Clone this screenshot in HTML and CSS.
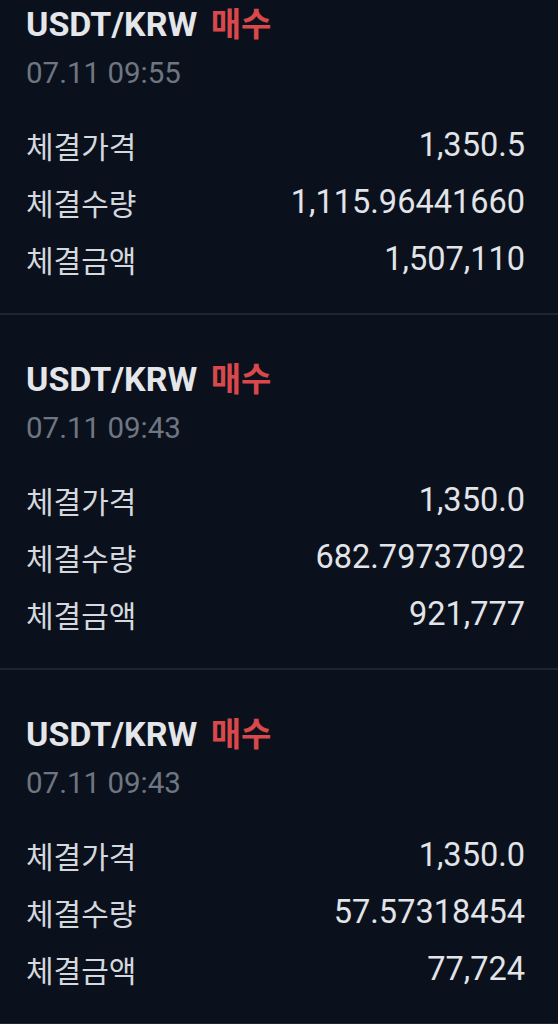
FILE: index.html
```html
<!DOCTYPE html>
<html lang="ko">
<head>
<meta charset="utf-8">
<title>체결내역</title>
<link rel="stylesheet" href="styles.css">
</head>
<body>
<main class="list">
  <section class="card">
    <h2 class="title">USDT/KRW <span class="side">매수</span></h2>
    <div class="date">07.11 09:55</div>
    <dl class="rows">
      <div class="row"><dt>체결가격</dt><dd>1,350.5</dd></div>
      <div class="row"><dt>체결수량</dt><dd>1,115.96441660</dd></div>
      <div class="row"><dt>체결금액</dt><dd>1,507,110</dd></div>
    </dl>
  </section>
  <section class="card">
    <h2 class="title">USDT/KRW <span class="side">매수</span></h2>
    <div class="date">07.11 09:43</div>
    <dl class="rows">
      <div class="row"><dt>체결가격</dt><dd>1,350.0</dd></div>
      <div class="row"><dt>체결수량</dt><dd>682.79737092</dd></div>
      <div class="row"><dt>체결금액</dt><dd>921,777</dd></div>
    </dl>
  </section>
  <section class="card">
    <h2 class="title">USDT/KRW <span class="side">매수</span></h2>
    <div class="date">07.11 09:43</div>
    <dl class="rows">
      <div class="row"><dt>체결가격</dt><dd>1,350.0</dd></div>
      <div class="row"><dt>체결수량</dt><dd>57.57318454</dd></div>
      <div class="row"><dt>체결금액</dt><dd>77,724</dd></div>
    </dl>
  </section>
</main>
</body>
</html>
```
FILE: styles.css
```css
html, body {
  margin: 0;
  padding: 0;
  background: #0a111d;
}
body {
  font-family: Roboto, "Noto Sans CJK KR", sans-serif;
  color: #e2e4e8;
  height: 1024px;
  overflow: hidden;
}
.list {
  display: flex;
  flex-direction: column;
}
.card {
  padding: 40px 33px 26px 26px;
  border-bottom: 2px solid #1d2531;
}
.card:first-child {
  padding-top: 0;
}
.title {
  margin: 0;
  height: 48px;
  font-size: 34px;
  line-height: 48px;
  font-weight: 700;
  color: #e4e6ea;
  white-space: nowrap;
}
.side {
  display: inline-block;
  margin-left: 5px;
  font-family: "Noto Sans CJK KR", sans-serif;
  font-size: 33px;
  line-height: 1;
  color: #d9484a;
  font-weight: 700;
}
.date {
  font-size: 29.5px;
  line-height: 50px;
  color: #6f7682;
}
.rows {
  margin: 18px 0 0;
  display: flex;
  flex-direction: column;
}
.row {
  display: flex;
  justify-content: space-between;
  align-items: center;
  height: 57px;
}
.row dt {
  font-family: "Noto Sans CJK KR", sans-serif;
  font-size: 30px;
  color: #d5d8dd;
}
.row dd {
  margin: 0;
  font-size: 32.5px;
  color: #e2e4e8;
}
```
